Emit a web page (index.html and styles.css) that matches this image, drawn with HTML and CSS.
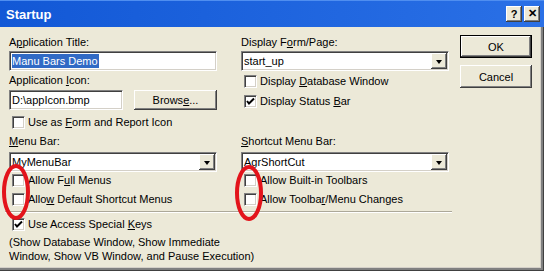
FILE: index.html
```html
<!DOCTYPE html>
<html lang="en">
<head>
  <meta charset="UTF-8">
  <title>Startup</title>
  <link rel="stylesheet" href="styles.css">
</head>
<body>
  <div class="dialog">
    <div class="titlebar">
      <span class="title">Startup</span>
      <div class="caption-buttons">
        <span class="cap-btn">?</span>
        <span class="cap-btn">✕</span>
      </div>
    </div>

    <div class="body">
      <div class="main">
        <div class="cols">
          <div class="col col-left">
            <div class="label">A<u>p</u>plication Title:</div>
            <div class="textbox tb-title"><span class="selected">Manu Bars Demo</span></div>
            <div class="label mt3">Application <u>I</u>con:</div>
            <div class="icon-row">
              <div class="textbox tb-icon">D:\appIcon.bmp</div>
              <div class="btn btn-browse"><span>Brows<u>e</u>...</span></div>
            </div>
            <label class="check mt6"><span class="box"></span><span>Use as <u>F</u>orm and Report Icon</span></label>
            <div class="label mt6"><u>M</u>enu Bar:</div>
            <div class="combo mt4"><span class="combo-text">MyMenuBar</span><span class="combo-arrow"></span></div>
            <label class="check mt2"><span class="box"></span><span>Allow F<u>u</u>ll Menus</span></label>
            <label class="check mt6"><span class="box"></span><span>Allo<u>w</u> Default Shortcut Menus</span></label>
          </div>

          <div class="col col-right">
            <div class="label">Display F<u>o</u>rm/Page:</div>
            <div class="combo mt2"><span class="combo-text">start_up</span><span class="combo-arrow"></span></div>
            <label class="check mt4"><span class="box"></span><span>Display <u>D</u>atabase Window</span></label>
            <label class="check mt7"><span class="box checked"><svg viewBox="0 0 11 11"><polyline points="2,5 4,7.5 9,2.5" /></svg></span><span>Display Status <u>B</u>ar</span></label>
            <div class="label mt27"><u>S</u>hortcut Menu Bar:</div>
            <div class="combo mt4"><span class="combo-text">AgrShortCut</span><span class="combo-arrow"></span></div>
            <label class="check mt2"><span class="box"></span><span>Allow Built-in Toolbars</span></label>
            <label class="check mt6"><span class="box"></span><span>Allow Toolba<u>r</u>/Menu Changes</span></label>
          </div>
        </div>

        <div class="separator"></div>

        <label class="check mt5"><span class="box checked"><svg viewBox="0 0 11 11"><polyline points="2,5 4,7.5 9,2.5" /></svg></span><span>Use Access Special <u>K</u>eys</span></label>
        <p class="note">(Show Database Window, Show Immediate<br>Window, Show VB Window, and Pause Execution)</p>
      </div>

      <div class="buttons">
        <div class="btn btn-default">OK</div>
        <div class="btn">Cancel</div>
      </div>
    </div>

    <!-- red marks drawn over the dialog -->
    <svg class="marks" width="544" height="271" viewBox="0 0 544 271">
      <ellipse cx="16" cy="192" rx="12" ry="26" />
      <ellipse cx="249" cy="193" rx="12" ry="26" />
    </svg>
  </div>
</body>
</html>
```

FILE: styles.css
```css
body {
  margin: 0;
  padding: 0;
  font-family: "Liberation Sans", Arial, sans-serif;
  font-size: 11px;
  color: #000;
  background: #ece9d8;
}
u {
  text-decoration: underline;
  text-underline-offset: 1px;
}
.dialog {
  position: relative;
  width: 544px;
  height: 271px;
  overflow: hidden;
  background: #ece9d8;
}
.titlebar {
  height: 27px;
  display: flex;
  align-items: center;
  justify-content: space-between;
  padding: 0 4px 0 6px;
  box-sizing: border-box;
  background: linear-gradient(to right, #1258d6, #2a70e6);
  border-top: 1px solid #4f8ef0;
}
.title {
  color: #fff;
  font-weight: bold;
  font-size: 13px;
  margin-top: 1px;
}
.caption-buttons {
  display: flex;
  gap: 2px;
  margin-top: -1px;
}
.cap-btn {
  width: 16px;
  height: 16px;
  box-sizing: border-box;
  display: flex;
  align-items: center;
  justify-content: center;
  background: #ece9d8;
  font-weight: bold;
  font-size: 11px;
  box-shadow: inset -1px -1px 0 #404040, inset 1px 1px 0 #fff, inset -2px -2px 0 #808080;
}
.body {
  height: 244px;
  box-sizing: border-box;
  display: flex;
  padding: 8px 0 0 9px;
  border-right: 1px solid #404040;
  border-bottom: 1px solid #404040;
  box-shadow: inset -2px -2px 0 #808080, inset -3px -3px 0 #d4d0c8;
}
.main {
  width: 440px;
}
.cols {
  display: flex;
  gap: 24px;
}
.col {
  width: 208px;
  padding-top: 1px;
  display: flex;
  flex-direction: column;
}
.label {
  height: 13px;
  line-height: 13px;
  white-space: nowrap;
}
.mt2 { margin-top: 2px; }
.mt3 { margin-top: 3px; }
.mt4 { margin-top: 4px; }
.mt5 { margin-top: 5px; }
.mt6 { margin-top: 6px; }
.mt7 { margin-top: 7px; }
.mt27 { margin-top: 27px; }

.textbox,
.combo {
  height: 20px;
  box-sizing: border-box;
  background: #fff;
  border: 1px solid;
  border-color: #808080 #fff #fff #808080;
  box-shadow: inset 1px 1px 0 #404040, inset -1px -1px 0 #d4d0c8;
  line-height: 18px;
  padding-left: 2px;
  white-space: nowrap;
}
.tb-title {
  margin-top: 2px;
}
.selected {
  display: inline-block;
  background: #316ac5;
  color: #fff;
  line-height: 14px;
  padding-right: 1px;
}
.icon-row {
  display: flex;
  margin-top: 3px;
  gap: 11px;
}
.tb-icon {
  width: 114px;
}
.btn {
  height: 23px;
  box-sizing: border-box;
  display: flex;
  align-items: center;
  justify-content: center;
  background: #ece9d8;
  box-shadow: inset -1px -1px 0 #404040, inset 1px 1px 0 #fff, inset -2px -2px 0 #808080;
}
.btn-browse {
  width: 83px;
  height: 20px;
}
.combo {
  display: flex;
  align-items: center;
  justify-content: space-between;
  padding: 0 1px 0 2px;
}
.combo-arrow {
  width: 16px;
  height: 16px;
  box-sizing: border-box;
  display: flex;
  align-items: center;
  justify-content: center;
  background: #ece9d8;
  box-shadow: inset -1px -1px 0 #404040, inset 1px 1px 0 #fff, inset -2px -2px 0 #808080;
}
.combo-arrow::after {
  content: "";
  border-left: 3.5px solid transparent;
  border-right: 3.5px solid transparent;
  border-top: 4px solid #000;
  margin-top: 1px;
}
.check {
  display: flex;
  align-items: center;
  height: 13px;
  line-height: 13px;
  gap: 3px;
  margin-left: 3px;
  white-space: nowrap;
}
.box {
  width: 13px;
  height: 13px;
  flex: none;
  box-sizing: border-box;
  background: #fff;
  border: 1px solid;
  border-color: #808080 #fff #fff #808080;
  box-shadow: inset 1px 1px 0 #404040, inset -1px -1px 0 #d4d0c8;
}
.box svg {
  display: block;
  width: 11px;
  height: 11px;
}
.box polyline {
  fill: none;
  stroke: #000;
  stroke-width: 2;
}
.separator {
  margin: 5px 0 0 -4px;
  width: 447px;
  height: 1px;
  background: #aca899;
  border-bottom: 1px solid #fff;
}
.note {
  margin: 4px 0 0 0;
  line-height: 14px;
}
.buttons {
  margin-left: 11px;
  width: 72px;
  display: flex;
  flex-direction: column;
  gap: 7px;
}
.btn-default {
  border: 1px solid #000;
}
.marks {
  position: absolute;
  top: 0;
  left: 0;
  pointer-events: none;
}
.marks ellipse {
  fill: none;
  stroke: #e3141b;
  stroke-width: 4;
}
```
